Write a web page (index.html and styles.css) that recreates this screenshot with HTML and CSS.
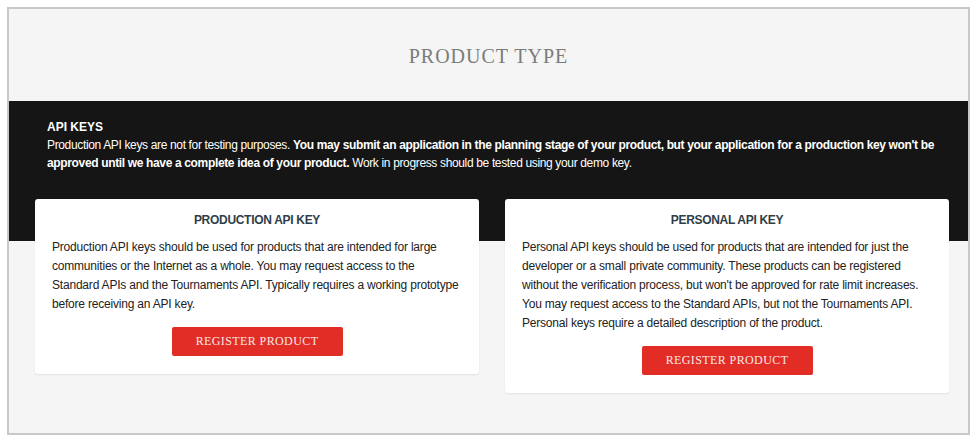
FILE: index.html
```html
<!DOCTYPE html>
<html>
<head>
<meta charset="utf-8">
<link rel="stylesheet" href="styles.css">
</head>
<body>
<div class="frame">
  <header class="page-head">
    <h1 class="page-title">PRODUCT TYPE</h1>
  </header>
  <section class="keys">
    <div class="intro">
      <h2 class="intro-title">API KEYS</h2>
      <p class="intro-text">Production API keys are not for testing purposes. <strong>You may submit an application in the planning stage of your product, but your application for a production key won't be approved until we have a complete idea of your product.</strong> Work in progress should be tested using your demo key.</p>
    </div>
    <div class="cards">
      <div class="card">
        <h3 class="card-title">PRODUCTION API KEY</h3>
        <p class="card-text">Production API keys should be used for products that are intended for large communities or the Internet as a whole. You may request access to the Standard APIs and the Tournaments API. Typically requires a working prototype before receiving an API key.</p>
        <div class="card-action"><button class="btn">REGISTER PRODUCT</button></div>
      </div>
      <div class="card">
        <h3 class="card-title">PERSONAL API KEY</h3>
        <p class="card-text">Personal API keys should be used for products that are intended for just the developer or a small private community. These products can be registered without the verification process, but won't be approved for rate limit increases. You may request access to the Standard APIs, but not the Tournaments API. Personal keys require a detailed description of the product.</p>
        <div class="card-action"><button class="btn">REGISTER PRODUCT</button></div>
      </div>
    </div>
  </section>
</div>
</body>
</html>
```
FILE: styles.css
```css
html, body {
  margin: 0;
  padding: 0;
  background: #ffffff;
}
body {
  font-family: "Liberation Sans", Arial, sans-serif;
}
.frame {
  margin: 7px 6px 7px 7px;
  height: 424px;
  border: 2px solid #c8c8c8;
  background: #f5f5f5;
  box-sizing: content-box;
  overflow: hidden;
}
.page-head {
  height: 92px;
  box-sizing: border-box;
  padding-top: 3px;
  display: flex;
  align-items: center;
  justify-content: center;
}
.page-title {
  margin: 0;
  font-family: "Liberation Serif", "Times New Roman", serif;
  font-weight: normal;
  font-size: 20px;
  letter-spacing: 1px;
  color: #7b7b7b;
}
.keys {
  background: linear-gradient(to bottom, #151515 0, #151515 140px, #f5f5f5 140px);
}
.intro {
  padding: 17px 20px 0 38px;
  color: #ffffff;
}
.intro-title {
  margin: 0;
  font-size: 12px;
  line-height: 18px;
  font-weight: bold;
}
.intro-text {
  margin: 0;
  font-size: 12px;
  line-height: 18px;
  letter-spacing: -0.35px;
}
.cards {
  display: flex;
  align-items: flex-start;
  gap: 26px;
  padding: 27px 19px 0 26px;
}
.card {
  width: 444px;
  flex: 0 0 444px;
  box-sizing: border-box;
  background: #ffffff;
  border-radius: 3px;
  box-shadow: 0 1px 2px rgba(0,0,0,0.08);
  padding: 12px 17px 18px;
}
.card-title {
  margin: 0;
  text-align: center;
  font-size: 12px;
  line-height: 19px;
  font-weight: bold;
  letter-spacing: -0.3px;
  color: #2f3e48;
}
.card-text {
  margin: 8px 0 0;
  font-size: 12px;
  line-height: 19px;
  color: #222222;
  letter-spacing: -0.2px;
}
.card-action {
  display: flex;
  justify-content: center;
  margin-top: 13px;
}
.btn {
  width: 171px;
  height: 29px;
  border: none;
  border-radius: 2px;
  background: #e12d26;
  color: #fbe7e6;
  font-family: "Liberation Serif", "Times New Roman", serif;
  font-size: 12px;
  letter-spacing: 0.4px;
  padding: 0;
}
```
